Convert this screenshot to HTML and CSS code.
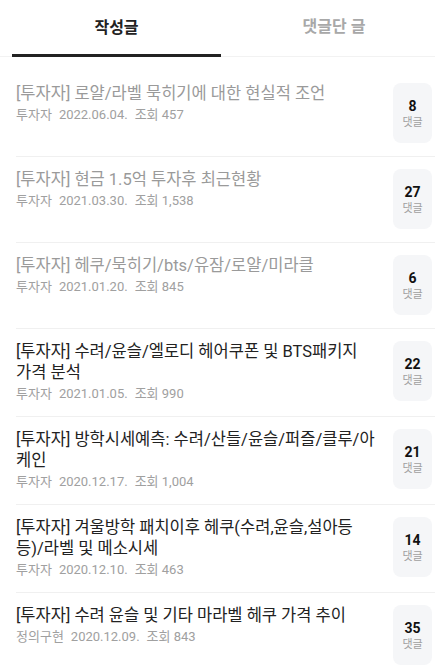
FILE: index.html
```html
<!DOCTYPE html>
<html lang="ko">
<head>
<meta charset="utf-8">
<link rel="stylesheet" href="styles.css">
</head>
<body>
<div class="tabs">
  <div class="tab active">작성글</div>
  <div class="tab">댓글단 글</div>
</div>
<ul class="list">
  <li class="item visited">
    <div class="text">
      <div class="title">[투자자] 로얄/라벨 묵히기에 대한 현실적 조언</div>
      <div class="meta"><span>투자자</span><span>2022.06.04.</span><span>조회 457</span></div>
    </div>
    <div class="count"><b>8</b><span>댓글</span></div>
  </li>
  <li class="item visited">
    <div class="text">
      <div class="title">[투자자] 현금 1.5억 투자후 최근현황</div>
      <div class="meta"><span>투자자</span><span>2021.03.30.</span><span>조회 1,538</span></div>
    </div>
    <div class="count"><b>27</b><span>댓글</span></div>
  </li>
  <li class="item visited">
    <div class="text">
      <div class="title">[투자자] 헤쿠/묵히기/bts/유잠/로얄/미라클</div>
      <div class="meta"><span>투자자</span><span>2021.01.20.</span><span>조회 845</span></div>
    </div>
    <div class="count"><b>6</b><span>댓글</span></div>
  </li>
  <li class="item">
    <div class="text">
      <div class="title">[투자자] 수려/윤슬/엘로디 헤어쿠폰 및 BTS패키지 <span class="nw">가격 분석</span></div>
      <div class="meta"><span>투자자</span><span>2021.01.05.</span><span>조회 990</span></div>
    </div>
    <div class="count"><b>22</b><span>댓글</span></div>
  </li>
  <li class="item">
    <div class="text">
      <div class="title">[투자자] 방학시세예측: 수려/산들/윤슬/퍼즐/클루/아케인</div>
      <div class="meta"><span>투자자</span><span>2020.12.17.</span><span>조회 1,004</span></div>
    </div>
    <div class="count"><b>21</b><span>댓글</span></div>
  </li>
  <li class="item">
    <div class="text">
      <div class="title">[투자자] 겨울방학 패치이후 헤쿠(수려,윤슬,설아등 등)/라벨 및 메소시세</div>
      <div class="meta"><span>투자자</span><span>2020.12.10.</span><span>조회 463</span></div>
    </div>
    <div class="count"><b>14</b><span>댓글</span></div>
  </li>
  <li class="item">
    <div class="text">
      <div class="title">[투자자] 수려 윤슬 및 기타 마라벨 헤쿠 가격 추이</div>
      <div class="meta"><span>정의구현</span><span>2020.12.09.</span><span>조회 843</span></div>
    </div>
    <div class="count"><b>35</b><span>댓글</span></div>
  </li>
</ul>
</body>
</html>
```

FILE: styles.css
```css
* { box-sizing: border-box; }
html, body { margin: 0; padding: 0; background: #fff; }
body {
  font-family: Roboto, "Noto Sans CJK KR", sans-serif;
  color: #222;
  width: 435px;
  height: 668px;
  overflow: hidden;
}
.tabs {
  display: flex;
  height: 57px;
  border-bottom: 1px solid #f2f2f2;
  padding-left: 12px;
}
.tab {
  display: flex;
  align-items: center;
  justify-content: center;
  font-size: 16px;
  font-weight: 700;
  color: #a8a8a8;
  padding-bottom: 6px;
}
.tab:first-child { width: 209px; }
.tab:last-child { flex: 1; padding-left: 12px; }
.tab.active {
  color: #222;
  border-bottom: 3px solid #222;
  margin-bottom: -1px;
  padding-bottom: 3px;
}
.list {
  list-style: none;
  margin: 0;
  padding: 14px 0 0 16px;
}
.item {
  display: flex;
  align-items: flex-start;
  padding: 12px 3px 13px 0;
  border-bottom: 1px solid #f0f0f0;
}
.text {
  flex: 1;
  min-width: 0;
  padding-right: 11px;
}
.title {
  font-size: 16.5px;
  line-height: 21px;
  color: #222;
}
.nw { white-space: nowrap; }
.visited .title { color: #9a9a9a; }
.meta {
  margin-top: 2px;
  font-size: 13px;
  line-height: 18px;
  color: #a0a0a0;
  display: flex;
  gap: 7px;
}
.count {
  width: 39px;
  height: 60px;
  flex: none;
  border-radius: 8px;
  background: #f5f6f8;
  display: flex;
  flex-direction: column;
  align-items: center;
  justify-content: center;
  padding-top: 2px;
}
.count b {
  font-size: 14px;
  line-height: 18px;
  font-weight: 700;
  color: #111;
}
.count span {
  font-size: 11px;
  line-height: 16px;
  color: #a0a0a0;
}
```
